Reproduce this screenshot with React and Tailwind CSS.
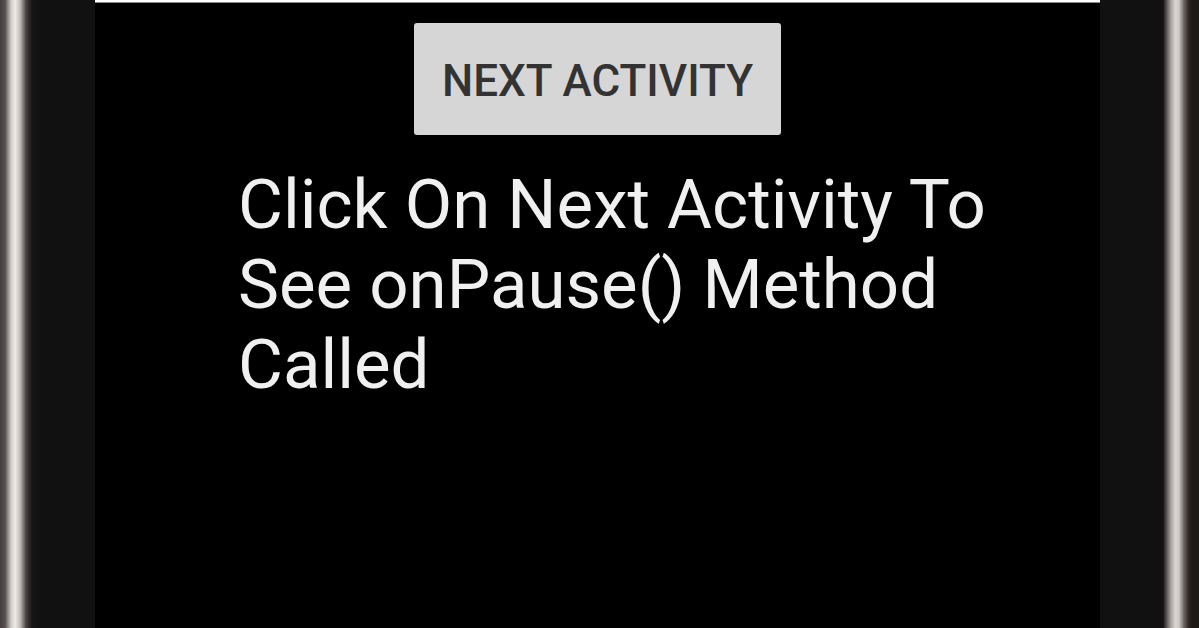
export default function App() {
  return (
    <div className="flex h-[628px] w-full overflow-hidden bg-black" style={{ fontFamily: "Roboto, 'Liberation Sans', sans-serif" }}>
      {/* left bezel */}
      <div className="h-full w-[95px] shrink-0 bg-[linear-gradient(to_right,#443d3d_0px,#574f4f_5px,#cfcac6_11px,#efebe8_15px,#c4bebb_20px,#4a4343_26px,#181515_32px,#111111_40px,#111111_95px)]" />

      {/* screen */}
      <div className="flex h-full flex-1 flex-col bg-black">
        <div className="h-[3px] w-full border-b border-[#8a8a8a] bg-white" />
        <div className="mt-[20px] flex justify-center">
          <button className="flex h-[112px] w-[367px] items-center justify-center rounded-[3px] bg-[#d6d6d6] pt-[4px] text-[44px] font-medium text-[#333333]">
            NEXT ACTIVITY
          </button>
        </div>
        <p className="mt-[30px] pl-[143px] text-[69px] leading-[80px] text-[#f0f0f0]">
          <span className="block">Click On Next Activity To</span>
          <span className="block">See onPause() Method</span>
          <span className="block">Called</span>
        </p>
      </div>

      {/* right bezel */}
      <div className="h-full w-[99px] shrink-0 bg-[linear-gradient(to_right,#111111_0px,#111111_63px,#3a3535_65px,#9a9490_70px,#d9d5d2_75px,#cfcac7_79px,#6a6360_84px,#2a2420_89px,#1d1915_92px,#1d1915_99px)]" />
    </div>
  );
}
